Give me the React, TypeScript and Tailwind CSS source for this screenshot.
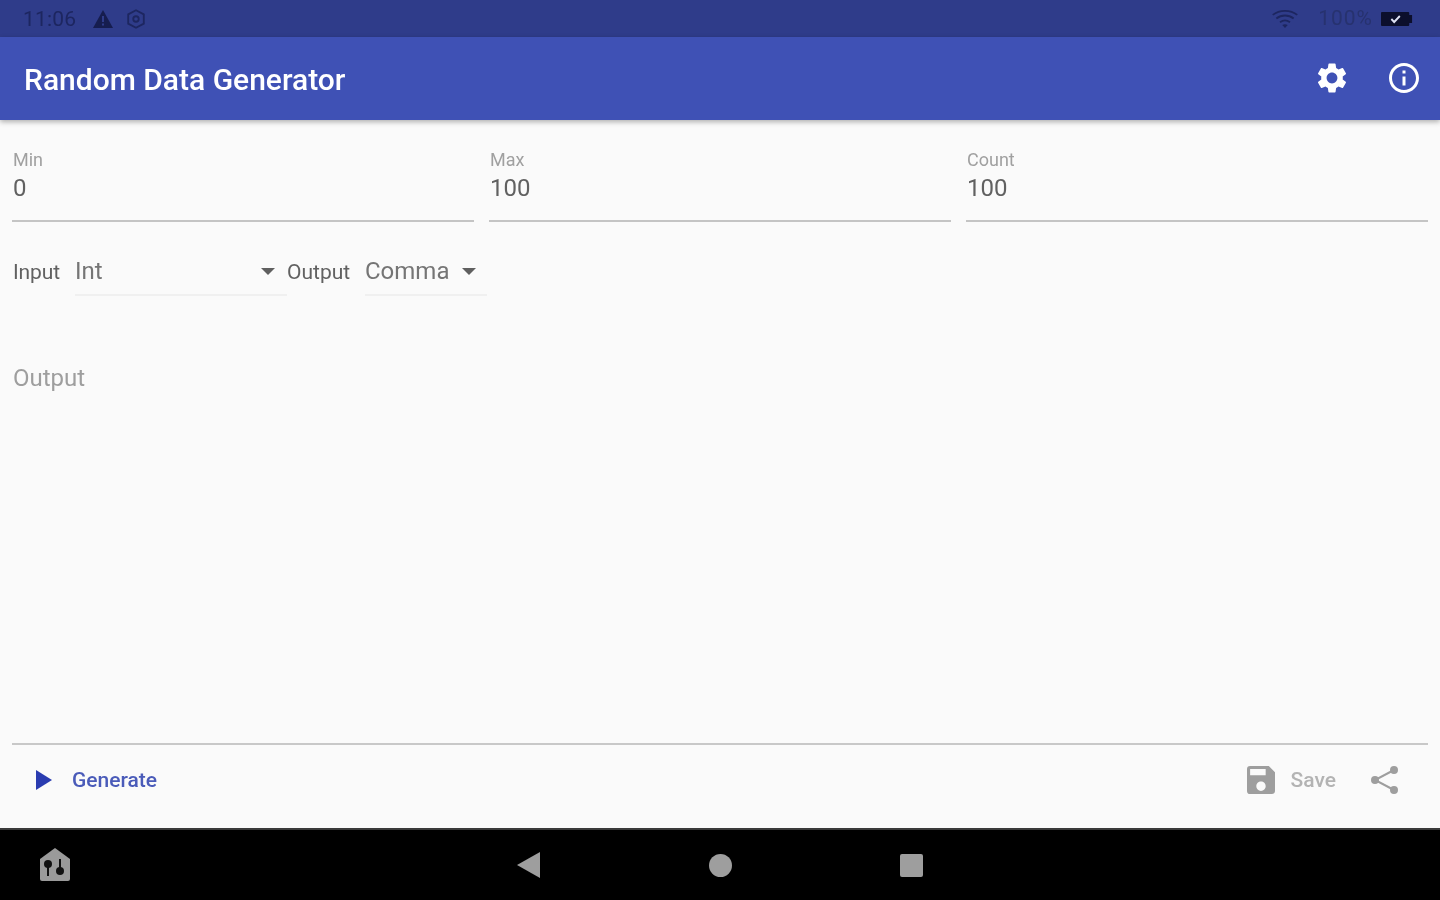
import React from "react";

function Field({ label, value }: { label: string; value: string }) {
  return (
    <div className="flex-1 min-w-0 h-[72px] border-b-2 border-[#c4c4c4] flex flex-col pl-[1px]">
      <div className="text-[18px] leading-[20px] text-[#a0a0a0]">{label}</div>
      <div className="text-[24px] leading-[28px] mt-[4px] text-[#616161]">{value}</div>
    </div>
  );
}

function Caret() {
  return (
    <svg width="14" height="7" viewBox="0 0 14 7" className="shrink-0">
      <path d="M0 0h14L7 7z" fill="#5f5f5f" />
    </svg>
  );
}

export default function App() {
  return (
    <div className="w-[1440px] h-[900px] flex flex-col overflow-hidden bg-[#fafafa] font-['Roboto',sans-serif] blur-[0.5px]">
      {/* status bar */}
      <div className="h-[37px] shrink-0 bg-[#2f3c8a] flex items-center pl-[23px] pr-[27px]">
        <span className="text-[21px] text-[#1d2660] leading-none tracking-[0.2px] mt-[2px]">11:06</span>
        <svg width="22" height="20" viewBox="0 0 22 20" className="ml-[16px]">
          <path d="M11 1 21 19H1z" fill="#161d4f" />
          <rect x="10" y="7" width="2" height="6" fill="#2f3c8a" />
          <rect x="10" y="14.5" width="2" height="2" fill="#2f3c8a" />
        </svg>
        <svg width="22" height="22" viewBox="0 0 24 24" className="ml-[11px]" fill="none" stroke="#1d2660" strokeWidth="2">
          <path d="M12 2.5 20.5 7v10L12 21.5 3.5 17V7z" />
          <circle cx="12" cy="12" r="3" />
        </svg>
        <div className="flex-1" />
        <svg width="28" height="20" viewBox="0 0 30 22" fill="none" stroke="#1d2660" strokeWidth="2">
          <path d="M1.5 6.5C9 .5 21 .5 28.5 6.5" />
          <path d="M5.5 10.5C11 6 19 6 24.5 10.5" />
          <path d="M9.5 14.5C13 12 17 12 20.5 14.5" />
          <path d="M15 21 12 17.5c2-1 4-1 6 0z" fill="#1d2660" stroke="none" />
        </svg>
        <span className="text-[21px] text-[#27326f] leading-none ml-[19px] tracking-[1px]">100%</span>
        <svg width="32" height="14" viewBox="0 0 34 14" className="ml-[8px]" preserveAspectRatio="none">
          <path d="M1 0h28a1 1 0 0 1 1 1v2h3v8h-3v2a1 1 0 0 1-1 1H1a1 1 0 0 1-1-1V1a1 1 0 0 1 1-1z" fill="#0c0f2c" />
          <path d="m11 7 3 3 6-6" fill="none" stroke="#dfe3f5" strokeWidth="2" />
        </svg>
      </div>

      {/* toolbar */}
      <div className="h-[83px] shrink-0 bg-[#3f51b5] flex items-center pl-[24px] pr-[18px] shadow-[0_2px_5px_rgba(0,0,0,0.3)] z-10">
        <span className="text-[30px] font-medium text-white leading-none mt-[2px]">Random Data Generator</span>
        <div className="flex-1" />
        <svg width="36" height="36" viewBox="0 0 24 24" fill="#fff" className="mb-[1px]">
          <path d="M19.14 12.94c.04-.3.06-.61.06-.94 0-.32-.02-.64-.07-.94l2.03-1.58a.49.49 0 0 0 .12-.61l-1.92-3.32a.488.488 0 0 0-.59-.22l-2.39.96c-.5-.38-1.03-.7-1.62-.94l-.36-2.54a.484.484 0 0 0-.48-.41h-3.84c-.24 0-.43.17-.47.41l-.36 2.54c-.59.24-1.13.57-1.62.94l-2.39-.96c-.22-.08-.47 0-.59.22L2.74 8.87c-.12.21-.08.47.12.61l2.03 1.58c-.05.3-.09.63-.09.94s.02.64.07.94l-2.03 1.58a.49.49 0 0 0-.12.61l1.92 3.32c.12.22.37.29.59.22l2.39-.96c.5.38 1.03.7 1.62.94l.36 2.54c.05.24.24.41.48.41h3.84c.24 0 .44-.17.47-.41l.36-2.54c.59-.24 1.13-.56 1.62-.94l2.39.96c.22.08.47 0 .59-.22l1.92-3.32c.12-.22.07-.47-.12-.61l-2.01-1.58zM12 15.6c-1.98 0-3.6-1.62-3.6-3.6s1.62-3.6 3.6-3.6 3.6 1.62 3.6 3.6-1.62 3.6-3.6 3.6z" />
        </svg>
        <svg width="36" height="36" viewBox="0 0 24 24" fill="#fff" className="ml-[36px] mb-[1px]">
          <path d="M11 7h2v2h-2zm0 4h2v6h-2zm1-9C6.48 2 2 6.48 2 12s4.48 10 10 10 10-4.48 10-10S17.52 2 12 2zm0 18c-4.41 0-8-3.59-8-8s3.59-8 8-8 8 3.59 8 8-3.59 8-8 8z" />
        </svg>
      </div>

      {/* content */}
      <div className="flex-1 min-h-0 flex flex-col px-[12px]">
        <div className="flex gap-[15px] mt-[30px]">
          <Field label="Min" value="0" />
          <Field label="Max" value="100" />
          <Field label="Count" value="100" />
        </div>

        <div className="flex mt-[26px] h-[48px]">
          <span className="text-[21px] leading-[48px] text-[#616161] w-[63px] pl-[1px] tracking-[-0.1px]">Input</span>
          <div className="w-[212px] h-[48px] border-b-2 border-[#f0f0f0] flex items-center">
            <span className="text-[24px] text-[#757575] flex-1 leading-none">Int</span>
            <Caret />
            <span className="w-[12px]" />
          </div>
          <span className="text-[21px] leading-[48px] text-[#616161] w-[78px]">Output</span>
          <div className="w-[122px] h-[48px] border-b-2 border-[#f0f0f0] flex items-center">
            <span className="text-[24px] text-[#757575] flex-1 leading-none">Comma</span>
            <Caret />
            <span className="w-[11px]" />
          </div>
        </div>

        <div className="text-[24px] leading-[28px] text-[#9e9e9e] mt-[68px] pl-[1px]">Output</div>

        <div className="flex-1" />
        <div className="h-[2px] bg-[#c8c8c8]" />
        <div className="h-[83px] flex items-center pl-[24px] pr-[28px] pb-[13px]">
          <svg width="16" height="20" viewBox="0 0 16 20">
            <path d="M0 0 16 10 0 20z" fill="#2a3cb0" />
          </svg>
          <span className="text-[21px] font-medium text-[#4a5bb9] ml-[20px] leading-none">Generate</span>
          <div className="flex-1" />
          <svg width="28" height="28" viewBox="3 3 18 18" fill="#9e9e9e">
            <path d="M17 3H5a2 2 0 0 0-2 2v14a2 2 0 0 0 2 2h14c1.1 0 2-.9 2-2V7l-4-4zm-5 16c-1.66 0-3-1.34-3-3s1.34-3 3-3 3 1.34 3 3-1.34 3-3 3zm3-10H5V5h10v4z" />
          </svg>
          <span className="text-[21px] font-medium text-[#b3b3b3] ml-[16px] leading-none">Save</span>
          <svg width="30" height="32" viewBox="0 0 30 32" className="ml-[34px]" fill="#9e9e9e" stroke="#9e9e9e" strokeWidth="2">
            <path d="M24 6 5 16l19 10" fill="none" />
            <circle cx="24" cy="6" r="3" />
            <circle cx="5" cy="16" r="3" />
            <circle cx="24" cy="26" r="3" />
          </svg>
        </div>
      </div>

      {/* nav bar */}
      <div className="h-[72px] shrink-0 bg-black border-t-2 border-[#3a3a3a] flex items-center relative">
        <svg width="32" height="34" viewBox="0 0 32 34" className="ml-[39px] mb-[2px]">
          <path d="M16 1 31 12v20a2 2 0 0 1-2 2H3a2 2 0 0 1-2-2V12z" fill="#9a9a9a" />
          <circle cx="9" cy="17" r="4" fill="#111" />
          <rect x="8" y="17" width="2" height="12" fill="#111" />
          <circle cx="21" cy="24" r="4" fill="#111" />
          <rect x="20" y="12" width="2" height="12" fill="#111" />
        </svg>
        <svg width="23" height="26" viewBox="0 0 23 26" className="ml-[446px]">
          <path d="M23 0v26L0 13z" fill="#9e9e9e" />
        </svg>
        <div className="w-[23px] h-[23px] rounded-full bg-[#9e9e9e] ml-[169px]" />
        <div className="w-[23px] h-[23px] rounded-[2px] bg-[#9e9e9e] ml-[168px]" />
      </div>
    </div>
  );
}
